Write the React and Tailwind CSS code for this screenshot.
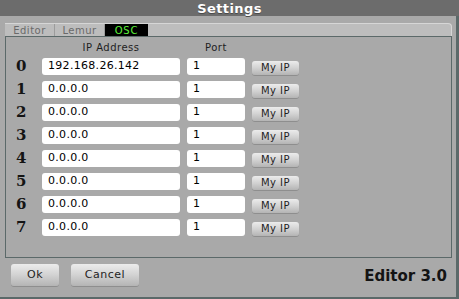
import React from 'react';

// OSC target list, index = row number
const TARGETS = [
    { ip: '192.168.26.142', port: '1' },
    { ip: '0.0.0.0', port: '1' },
    { ip: '0.0.0.0', port: '1' },
    { ip: '0.0.0.0', port: '1' },
    { ip: '0.0.0.0', port: '1' },
    { ip: '0.0.0.0', port: '1' },
    { ip: '0.0.0.0', port: '1' },
    { ip: '0.0.0.0', port: '1' },
];

const sans = { fontFamily: '"DejaVu Sans", Verdana, sans-serif' };

function GrayButton({ children, className }) {
    return (
        <button
            style={sans}
            className={`rounded-[3px] bg-gradient-to-b from-[#ececec] via-[#d2d2d2] to-[#b4b4b4] text-[#1e1e1e] shadow-[0_1px_0_#8e8e8e] tracking-[0.5px] ${className}`}
        >
            {children}
        </button>
    );
}

export default function App() {
    return (
        <div className="w-[459px] h-[299px] bg-[#a9a9a9] flex flex-col overflow-hidden" style={sans}>
            {/* Title bar */}
            <div className="h-[16px] bg-[#6c6c6c] flex items-center justify-center">
                <span className="text-white font-bold text-[13px] tracking-[0.4px] leading-none [text-shadow:0_1px_0_#4a4a4a]">Settings</span>
            </div>

            <div className="flex-1 flex flex-col border-r-[3px] border-b-2 border-[#5b6969]">
                {/* Tabs */}
                <div className="mt-[7px] ml-[5px] mr-[4px] h-[13px] flex bg-[#bdbdbd] rounded-tr-[4px] border-t border-r border-[#d6d6d6]">
                    <div className="w-[50px] flex items-center justify-center text-[10px] text-[#6a6a6a] tracking-[0.5px] border-r border-[#9c9c9c]">Editor</div>
                    <div className="w-[50px] flex items-center justify-center text-[10px] text-[#6a6a6a] tracking-[0.5px] border-r border-[#9c9c9c]">Lemur</div>
                    <div className="w-[43px] flex items-center justify-center text-[10px] text-[#5cf03a] bg-black tracking-[0.8px]">OSC</div>
                </div>

                {/* Panel */}
                <div className="ml-[5px] mr-[4px] h-[222px] border border-[#5b6969] flex flex-col">
                    <div className="h-[21px] flex items-start pt-[3px] text-[10px] text-[#1e1e1e] tracking-[0.5px]">
                        <div className="w-[36px]" />
                        <div className="w-[138px] text-center">IP Address</div>
                        <div className="w-[7px]" />
                        <div className="w-[58px] text-center">Port</div>
                    </div>
                    <div className="flex flex-col gap-[6px]">
                        {TARGETS.map((t, i) => (
                            <div key={i} className="h-[17px] flex items-center">
                                <div className="w-[36px] pl-[10px] text-[15px] font-bold text-[#141414]" style={{ fontFamily: '"DejaVu Serif", "Liberation Serif", serif' }}>{i}</div>
                                <div className="w-[138px] h-[17px] bg-white rounded-[3px] pl-[6px] flex items-center text-[11px] text-black tracking-[0.3px]">{t.ip}</div>
                                <div className="w-[58px] h-[17px] ml-[7px] bg-white rounded-[3px] pl-[6px] flex items-center text-[11px] text-black">{t.port}</div>
                                <GrayButton className="ml-[7px] w-[47px] h-[14px] mt-[2px] text-[10px] leading-none">My IP</GrayButton>
                            </div>
                        ))}
                    </div>
                </div>

                {/* Footer */}
                <div className="flex items-start pt-[6px] pl-[11px] pr-[9px]">
                    <GrayButton className="w-[48px] h-[22px] text-[11px]">Ok</GrayButton>
                    <GrayButton className="w-[68px] h-[22px] ml-[12px] text-[11px]">Cancel</GrayButton>
                    <div className="ml-auto mt-[5px] text-[15px] font-bold text-[#141414] leading-none">Editor 3.0</div>
                </div>
            </div>
        </div>
    );
}
